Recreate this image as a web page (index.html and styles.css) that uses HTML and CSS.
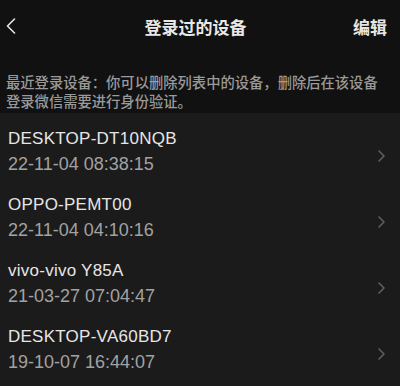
FILE: index.html
```html
<!DOCTYPE html>
<html lang="zh-CN">
<head>
<meta charset="utf-8">
<title>登录过的设备</title>
<link rel="stylesheet" href="styles.css">
</head>
<body>
<div class="page">
  <header class="topbar">
    <svg class="back" width="10" height="16" viewBox="0 0 10 16"><path d="M8.5 1 L1.5 8 L8.5 15" fill="none" stroke="#e6e6e6" stroke-width="1.6" stroke-linecap="round" stroke-linejoin="round"/></svg>
    <div class="title">登录过的设备</div>
    <div class="edit">编辑</div>
  </header>
  <p class="desc">最近登录设备：你可以删除列表中的设备，删除后在该设备登录微信需要进行身份验证。</p>
  <ul class="list">
    <li class="row"><div class="info"><div class="name">DESKTOP-DT10NQB</div><div class="time">22-11-04 08:38:15</div></div><svg class="chev" width="9" height="14" viewBox="0 0 9 14"><path d="M2 2 L7 7 L2 12" fill="none" stroke="#5e5e5e" stroke-width="1.6" stroke-linecap="round" stroke-linejoin="round"/></svg></li>
    <li class="row"><div class="info"><div class="name">OPPO-PEMT00</div><div class="time">22-11-04 04:10:16</div></div><svg class="chev" width="9" height="14" viewBox="0 0 9 14"><path d="M2 2 L7 7 L2 12" fill="none" stroke="#5e5e5e" stroke-width="1.6" stroke-linecap="round" stroke-linejoin="round"/></svg></li>
    <li class="row"><div class="info"><div class="name">vivo-vivo Y85A</div><div class="time">21-03-27 07:04:47</div></div><svg class="chev" width="9" height="14" viewBox="0 0 9 14"><path d="M2 2 L7 7 L2 12" fill="none" stroke="#5e5e5e" stroke-width="1.6" stroke-linecap="round" stroke-linejoin="round"/></svg></li>
    <li class="row"><div class="info"><div class="name">DESKTOP-VA60BD7</div><div class="time">19-10-07 16:44:07</div></div><svg class="chev" width="9" height="14" viewBox="0 0 9 14"><path d="M2 2 L7 7 L2 12" fill="none" stroke="#5e5e5e" stroke-width="1.6" stroke-linecap="round" stroke-linejoin="round"/></svg></li>
  </ul>
</div>
</body>
</html>
```
FILE: styles.css
```css
html, body {
  margin: 0;
  padding: 0;
  background: #111111;
}
.page {
  width: 400px;
  height: 386px;
  overflow: hidden;
  background: #111111;
  font-family: "Liberation Sans", "Noto Sans CJK SC", sans-serif;
  display: flex;
  flex-direction: column;
}
.topbar {
  height: 52px;
  display: flex;
  align-items: center;
  justify-content: space-between;
  padding: 0 13px 0 6px;
  position: relative;
}
.back {
  display: block;
  margin-top: -1px;
}
.title {
  position: absolute;
  left: 0;
  right: 0;
  text-align: center;
  font-family: "Noto Sans CJK SC", sans-serif;
  font-weight: 700;
  font-size: 17px;
  color: #e8e8e8;
  pointer-events: none;
  margin-left: -9px;
}
.edit {
  font-family: "Noto Sans CJK SC", sans-serif;
  font-weight: 700;
  font-size: 17px;
  color: #e6e6e6;
}
.desc {
  margin: 0;
  padding: 20px 20px 3px 6px;
  font-family: "Noto Sans CJK SC", sans-serif;
  font-weight: 500;
  font-size: 14.3px;
  line-height: 19px;
  color: #9a9a9a;
}
.list {
  list-style: none;
  margin: 0;
  padding: 0;
  background: #1b1b1b;
  flex: 1;
}
.row {
  height: 66px;
  box-sizing: border-box;
  padding: 14px 14px 0 8px;
  display: flex;
  justify-content: space-between;
  align-items: flex-start;
}
.name {
  font-size: 17px;
  letter-spacing: 0.25px;
  line-height: 23px;
  color: #e6e6e6;
}
.time {
  margin-top: 3px;
  font-size: 18px;
  line-height: 22px;
  color: #a2a2a2;
}
.chev {
  display: block;
  margin-top: 22px;
}
```
